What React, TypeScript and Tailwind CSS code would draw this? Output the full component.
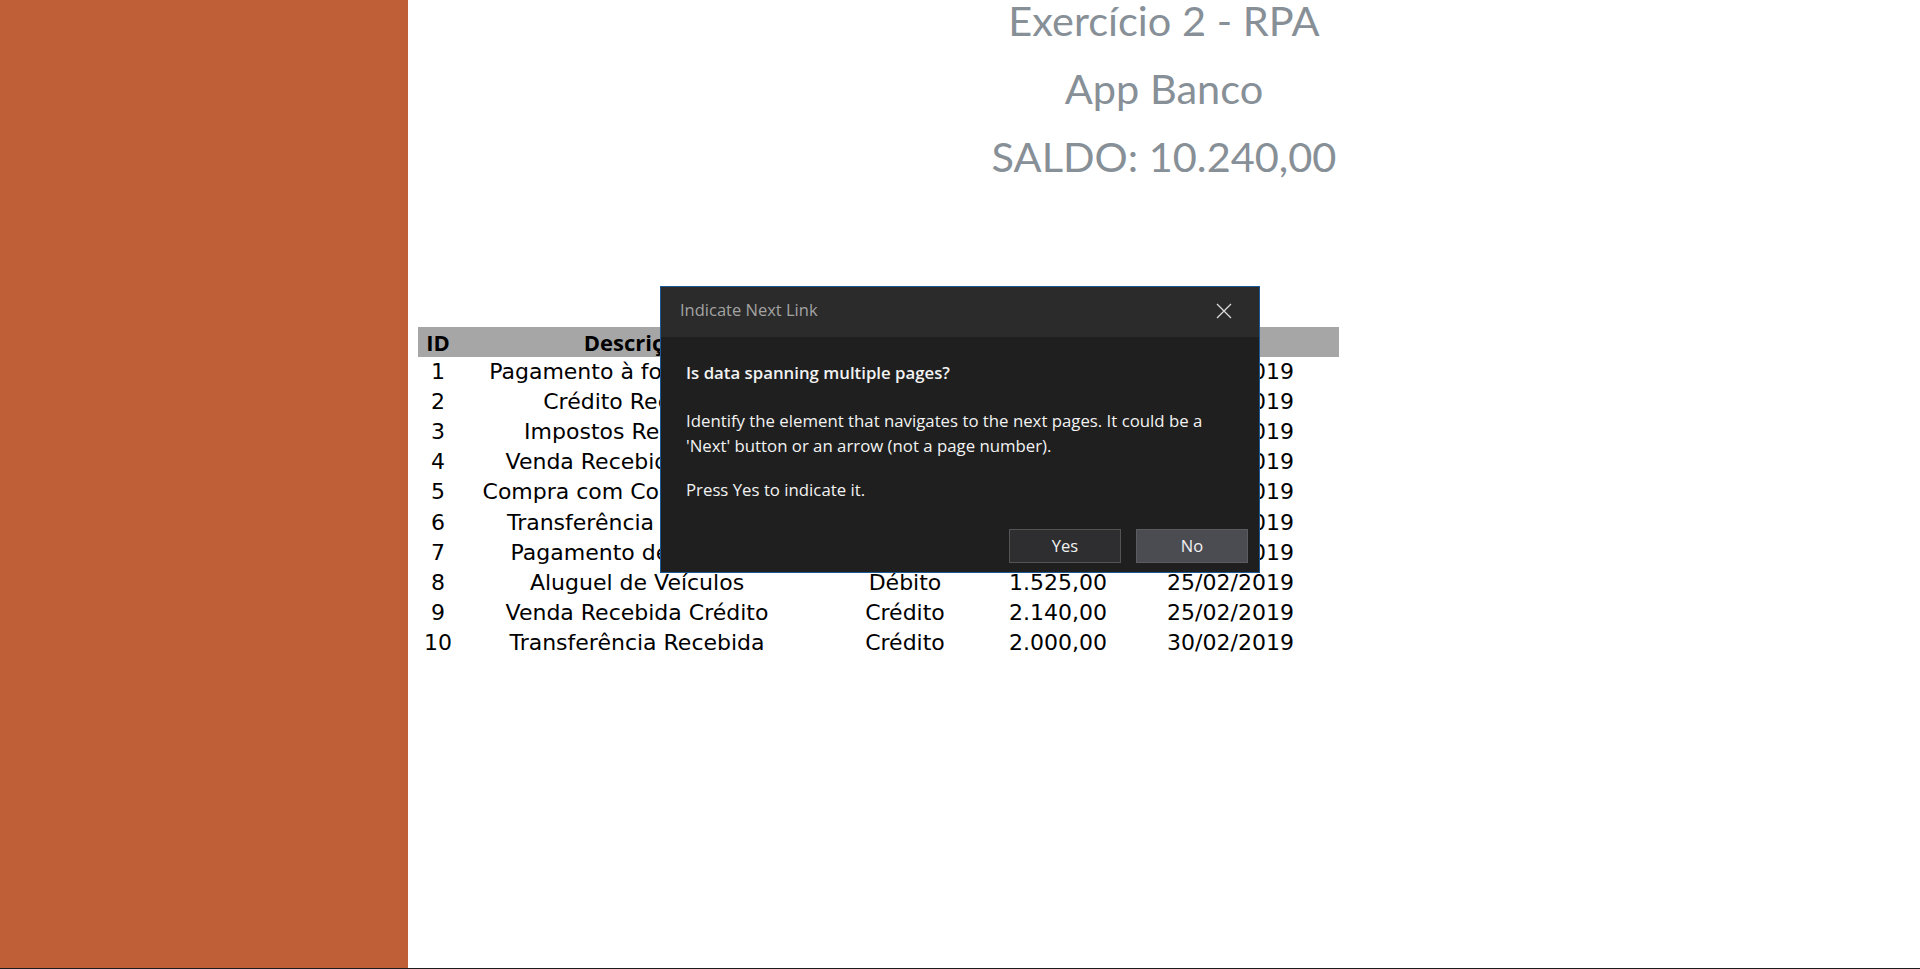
type Row = {
    id: number;
    descricao: string;
    tipo: string;
    valor: string;
    data: string;
};

const rows: Row[] = [
    { id: 1, descricao: 'Pagamento à fornecedores', tipo: 'Débito', valor: '1.200,00', data: '05/02/2019' },
    { id: 2, descricao: 'Crédito Recebido', tipo: 'Crédito', valor: '3.500,00', data: '08/02/2019' },
    { id: 3, descricao: 'Impostos Recolhidos', tipo: 'Débito', valor: '850,00', data: '10/02/2019' },
    { id: 4, descricao: 'Venda Recebida Crédito', tipo: 'Crédito', valor: '1.750,00', data: '12/02/2019' },
    { id: 5, descricao: 'Compra com Computadores', tipo: 'Débito', valor: '640,00', data: '15/02/2019' },
    { id: 6, descricao: 'Transferência Realizada', tipo: 'Débito', valor: '1.000,00', data: '18/02/2019' },
    { id: 7, descricao: 'Pagamento de Salários', tipo: 'Débito', valor: '2.300,00', data: '20/02/2019' },
    { id: 8, descricao: 'Aluguel de Veículos', tipo: 'Débito', valor: '1.525,00', data: '25/02/2019' },
    { id: 9, descricao: 'Venda Recebida Crédito', tipo: 'Crédito', valor: '2.140,00', data: '25/02/2019' },
    { id: 10, descricao: 'Transferência Recebida', tipo: 'Crédito', valor: '2.000,00', data: '30/02/2019' },
];

const cols = 'grid grid-cols-[40px_358px_178px_128px_217px] text-center';

function NextLinkDialog() {
    return (
        <div
            className="absolute left-[660px] top-[286px] w-[600px] h-[287px] border border-[#1b5896] bg-[#1f1f1f] flex flex-col text-[#f2f2f2]"
            style={{ fontFamily: '"Open Sans", "Noto Sans", sans-serif' }}
        >
            {/* Title bar */}
            <div className="h-[50px] bg-[#2b2b2b] flex items-center justify-between pl-[19px] pr-[27px] pb-[4px]">
                <span className="text-[16.5px] text-[#a3a3a3]">Indicate Next Link</span>
                <svg width="16" height="16" viewBox="0 0 16 16" className="text-[#dcdcdc] mt-[2px]">
                    <path d="M1 1L15 15M15 1L1 15" stroke="currentColor" strokeWidth="1.3" fill="none" />
                </svg>
            </div>

            {/* Body */}
            <div className="flex-1 flex flex-col pl-[25px] pr-[11px] pt-[24px] text-[16.8px]">
                <p className="font-semibold leading-[24px]">Is data spanning multiple pages?</p>
                <p className="mt-[24px] leading-[24.5px]">
                    Identify the element that navigates to the next pages. It could be a
                    <br />
                    'Next' button or an arrow (not a page number).
                </p>
                <p className="mt-[20px] leading-[24px]">Press Yes to indicate it.</p>

                <div className="mt-auto mb-[9px] flex justify-end gap-[15px]">
                    <button className="w-[112px] h-[34px] bg-[#2e2e30] border border-[#545454] text-[16.5px]">
                        Yes
                    </button>
                    <button className="w-[112px] h-[34px] bg-[#4b4b52] border border-[#5c5c60] text-[16.5px]">
                        No
                    </button>
                </div>
            </div>
        </div>
    );
}

export default function App() {
    return (
        <div className="relative h-[969px] flex flex-col overflow-hidden bg-white">
            <div className="flex flex-1">
                {/* Side panel */}
                <aside className="w-[408px] bg-[#bf5f38]" />

                {/* Content */}
                <main className="flex-1">
                    <div
                        className="flex flex-col items-center gap-7 text-[41.5px] leading-[40px] text-[#878f97]"
                        style={{ fontFamily: 'Lato, "Noto Sans", sans-serif' }}
                    >
                        <h1>Exercício 2 - RPA</h1>
                        <h2>App Banco</h2>
                        <h2>SALDO: 10.240,00</h2>
                    </div>

                    <div className="mt-[151px] ml-[10px] w-[921px] text-black">
                        <div
                            className={`${cols} h-[30px] items-center bg-[#a6a6a6] font-bold text-[22px] leading-[30px] pb-[2px]`}
                            style={{ fontFamily: '"Open Sans", "Noto Sans", sans-serif' }}
                        >
                            <span>ID</span>
                            <span>Descrição</span>
                            <span>Tipo</span>
                            <span>Valor</span>
                            <span>Data</span>
                        </div>
                        {rows.map((r) => (
                            <div
                                key={r.id}
                                className={`${cols} h-[30.1px] items-center text-[22px] leading-[30px]`}
                                style={{ fontFamily: '"DejaVu Sans", Lato, sans-serif' }}
                            >
                                <span>{r.id}</span>
                                <span>{r.descricao}</span>
                                <span>{r.tipo}</span>
                                <span>{r.valor}</span>
                                <span>{r.data}</span>
                            </div>
                        ))}
                    </div>
                </main>
            </div>
            <div className="h-px bg-[#1c1c1c]" />

            <NextLinkDialog />
        </div>
    );
}
